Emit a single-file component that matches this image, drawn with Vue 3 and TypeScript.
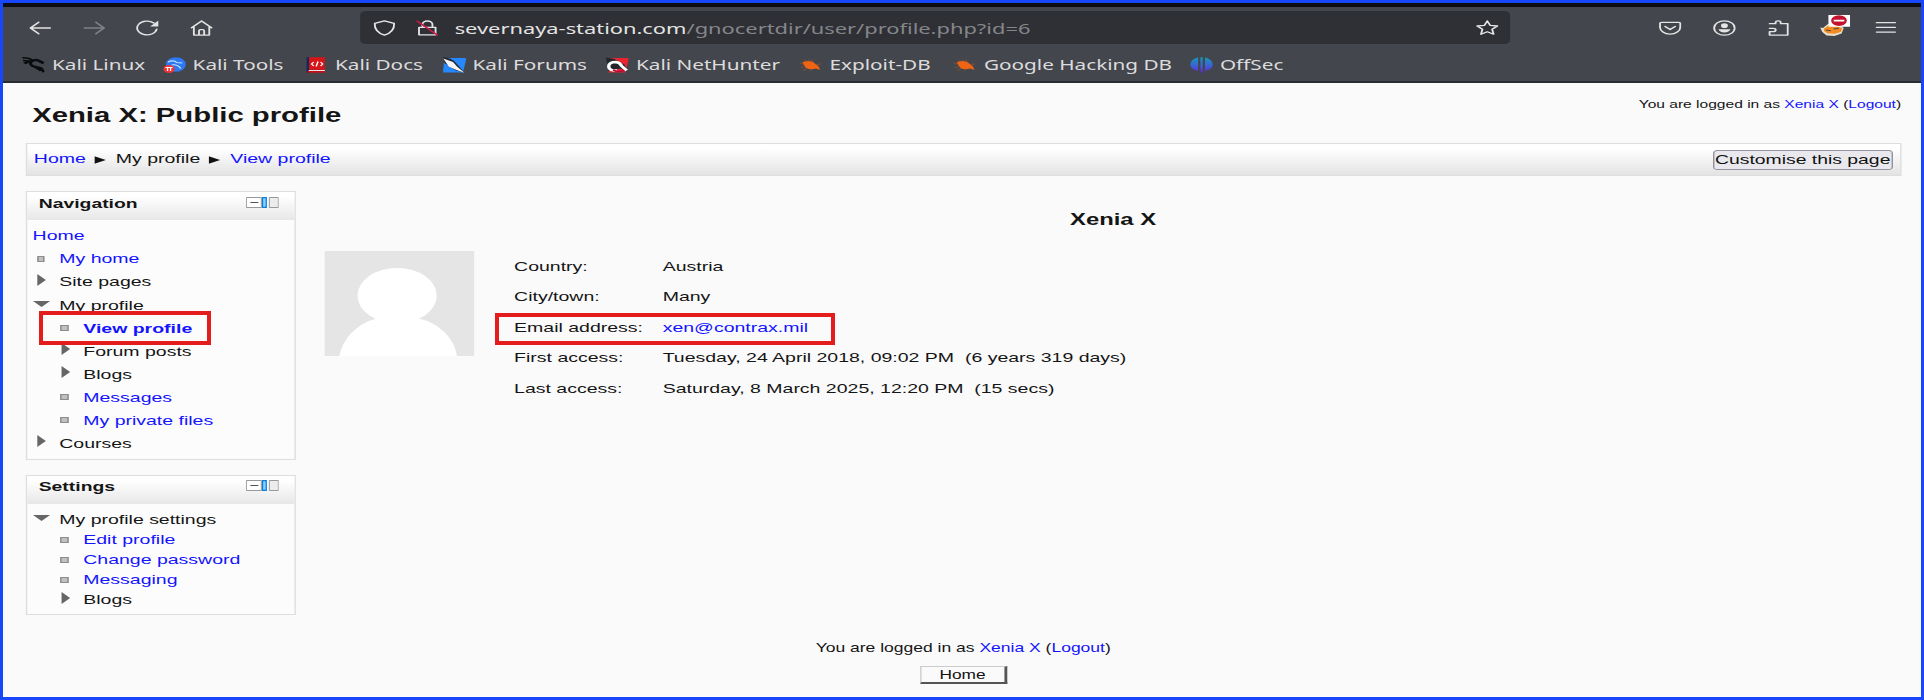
<script setup lang="ts">
type Marker = 'none' | 'leaf' | 'closed' | 'open'

interface TreeItem {
  label: string
  level: number
  marker: Marker
  link?: boolean
  current?: boolean
}

interface Block {
  title: string
  kind: string
  items: TreeItem[]
}

interface Bookmark {
  label: string
  icon: string
  width: number
}

const bookmarks: Bookmark[] = [
  { label: 'Kali Linux', icon: 'dragon', width: 98.4 },
  { label: 'Kali Tools', icon: 'tools', width: 99.7 },
  { label: 'Kali Docs', icon: 'docs', width: 96.3 },
  { label: 'Kali Forums', icon: 'forums', width: 114.4 },
  { label: 'Kali NetHunter', icon: 'hunter', width: 135.5 },
  { label: 'Exploit-DB', icon: 'bug', width: 108.1 },
  { label: 'Google Hacking DB', icon: 'bug', width: 165.2 },
  { label: 'OffSec', icon: 'offsec', width: 80 },
]

const blocks: Block[] = [
  {
    title: 'Navigation',
    kind: 'navigation',
    items: [
      { label: 'Home', level: 0, marker: 'none', link: true },
      { label: 'My home', level: 1, marker: 'leaf', link: true },
      { label: 'Site pages', level: 1, marker: 'closed' },
      { label: 'My profile', level: 1, marker: 'open' },
      { label: 'View profile', level: 2, marker: 'leaf', link: true, current: true },
      { label: 'Forum posts', level: 2, marker: 'closed' },
      { label: 'Blogs', level: 2, marker: 'closed' },
      { label: 'Messages', level: 2, marker: 'leaf', link: true },
      { label: 'My private files', level: 2, marker: 'leaf', link: true },
      { label: 'Courses', level: 1, marker: 'closed' },
    ],
  },
  {
    title: 'Settings',
    kind: 'settings',
    items: [
      { label: 'My profile settings', level: 1, marker: 'open' },
      { label: 'Edit profile', level: 2, marker: 'leaf', link: true },
      { label: 'Change password', level: 2, marker: 'leaf', link: true },
      { label: 'Messaging', level: 2, marker: 'leaf', link: true },
      { label: 'Blogs', level: 2, marker: 'closed' },
    ],
  },
]

const details = [
  { label: 'Country:', value: 'Austria' },
  { label: 'City/town:', value: 'Many' },
  { label: 'Email address:', value: 'xen@contrax.mil', link: true },
  { label: 'First access:', value: 'Tuesday, 24 April 2018, 09:02 PM\u00a0 (6 years 319 days)' },
  { label: 'Last access:', value: 'Saturday, 8 March 2025, 12:20 PM\u00a0 (15 secs)' },
]
</script>

<template>
  <div class="frame">
    <div class="screen">
      <div class="tabstrip"></div>
      <header class="chrome">
        <div class="toolbar">
          <div class="group">
            <svg class="ico" viewBox="0 0 16 16"><path d="M15 8H1.500M7 2.200 1.200 8 7 13.800" /></svg>
            <svg class="ico dim" viewBox="0 0 16 16"><path d="M1 8h13.500M9 2.200 14.800 8 9 13.800" /></svg>
            <svg class="ico" viewBox="0 0 16 16"><path d="M14.600 9.200A6.900 6.900 0 1 1 12.600 3" /><path class="fill" d="M15.800.6v5.800H10z" /></svg>
            <svg class="ico" viewBox="0 0 16 16"><path d="M1 7.800 8 1l7 6.800M2.600 6.800v8.300h10.800V6.800M6.200 15v-4.300q0-1 1-1h1.600q1 0 1 1V15" /></svg>
          </div>
          <div class="urlbar">
            <svg class="ico" viewBox="0 0 16 16"><path d="M8 .8 14.800 3.400C15 9 12.500 13 8 15.200 3.500 13 1 9 1.200 3.400z" /></svg>
            <svg class="ico lock" viewBox="0 0 16 16"><path d="M4.600 7V4.500a3.500 3.500 0 0 1 7 0V7M2.200 7.300h11.600v7.500H2.200z" /><path class="slash" d="M1 1.200 15 15" /></svg>
            <span class="url"><b>severnaya-station.com</b>/gnocertdir/user/profile.php?id=6</span>
            <svg class="ico star" viewBox="0 0 16 16"><path d="m8 .9 2.100 4.500 5 .6-3.700 3.300 1 4.900L8 11.800l-4.400 2.400 1-4.900L.9 6l5-.6z" /></svg>
          </div>
          <div class="group end">
            <svg class="ico" viewBox="0 0 16 16"><path d="M1.900 2.300h12.200q1 0 1 1v3.900a7.100 6.900 0 0 1-14.200 0V3.300q0-1 1-1zM4.500 6.500 8 9.600l3.500-3.100" /></svg>
            <svg class="ico" viewBox="0 0 16 16"><circle cx="8" cy="8" r="7.200" /><circle class="fill" cx="8" cy="5.700" r="2.400" /><path class="fill" d="M3.800 9.300h8.400c-.4 2-2 3.200-4.200 3.200s-3.800-1.200-4.200-3.200z" /></svg>
            <svg class="ico" viewBox="0 0 16 16"><path d="M1.600 3.700h4.200V2.600a1.800 1.800 0 0 1 3.600 0v1.100h4.900v11.400H1.600v-3.400h2.600a1.700 1.700 0 0 0 0-3.400H1.600" /></svg>
            <svg class="fox" viewBox="0 0 21 21">
              <path fill="#e9e0cb" d="M0 12.500 2 13l3-3.500 5-2.500 6.500 6-1.500 5.500-5 2.500-5.500-.5L1.500 17z" />
              <path fill="#f18b24" d="M2.500 13.500 4 12.500l2-2.500h5l4.500 3.500-1 3.500-4.500 1.700-5-.5L2.800 16z" />
              <path fill="none" stroke="#5a4939" stroke-width="1" d="m4 15 3.500.8M9.500 14l3.500-.8" />
              <path fill="#fff" d="M5.800 0h15.200v11.800H5.800z" />
              <ellipse cx="13.200" cy="5.600" rx="5.500" ry="5.300" fill="#c3122f" />
              <path fill="#fff" d="M9.500 4.700h7.400v1.900H9.500z" />
            </svg>
            <svg class="ico" viewBox="0 0 16 16"><path d="M1.500 2.700h13M1.500 7.400h13M1.500 12.100h13" /></svg>
          </div>
        </div>
        <nav class="bookmarks">
          <div v-for="mark in bookmarks" :key="mark.label" class="bookmark" :style="{ width: mark.width + 'px' }">
            <svg v-if="mark.icon === 'dragon'" class="fav" viewBox="0 0 16 16">
              <path fill="none" stroke="#0b0c0e" stroke-width="1.500" d="M.5.800q5.500.2 7.500 2.700M1 3.500l5 .8" />
              <path fill="none" stroke="#0b0c0e" stroke-width="2.400" d="M2 6.500q2-2.300 5-2.300 3-2.200 5-.5l3.500 2.500" />
              <path fill="none" stroke="#0b0c0e" stroke-width="2.200" d="M6.500 4.500q-1 4.500 3 5.200l4 1.500 2.300 4M9 9.500l4.500 4" />
            </svg>
            <svg v-else-if="mark.icon === 'tools'" class="fav" viewBox="0 0 16 16">
              <ellipse cx="9" cy="7.500" rx="7" ry="7.300" fill="#2c79f3" />
              <path fill="none" stroke="#c9e0ff" stroke-width="1.100" d="M3.500 5q4-2.500 6 .5l4 .5M6 8q4-1 6.500 3.500" />
              <circle cx="4.200" cy="12" r="4" fill="#ee3434" />
              <path fill="none" stroke="#fff" stroke-width=".9" d="M1.700 10.500h5M3.200 10.500v3.500M5.300 10.500v3.500" />
            </svg>
            <svg v-else-if="mark.icon === 'docs'" class="fav" viewBox="0 0 16 16">
              <path fill="#16275a" d="M1.500.3h2v15.400h-2z" />
              <path fill="#d81418" d="M3.300.3h11v12.500h-11z" />
              <path fill="#f1dede" d="M3 13h11.300v1.200H3z" />
              <path fill="#c80e14" d="M2 14h12.500v1.700H2z" />
              <path fill="none" stroke="#fff" stroke-width="1" d="M6.500 5 5 7l1.500 2M11.300 5l1.500 2-1.500 2M9.500 4.500l-1.300 5" />
            </svg>
            <svg v-else-if="mark.icon === 'forums'" class="fav" viewBox="0 0 16 16">
              <path fill="#2688ff" d="M1 1h15.500L14 15.500H0z" />
              <path fill="#24282e" d="M0 0q6 1 8.500 5l6.500 10.500-6-2L1 6z" />
              <path fill="#f4f5f6" d="M.2 1.500 7 5l2.800 4.500 5.200 6.200-5.500-2.700L4 9.500z" />
            </svg>
            <svg v-else-if="mark.icon === 'hunter'" class="fav" viewBox="0 0 16 16">
              <path fill="#ea2431" d="M3 1h13.200L13.500 15.500H2z" />
              <path fill="#22252a" d="M0 .5 6 2l7 5.500 2 7-5-3-8 2.500-1-7z" />
              <path fill="none" stroke="#fff" stroke-width="2.400" d="M8 13.500q-6 .5-6-4t5-4.500q3 .500 4 4l3.500 4.500" />
              <path fill="none" stroke="#b90e37" stroke-width="1.500" d="M5 13q4 2.500 8 .5" />
            </svg>
            <svg v-else-if="mark.icon === 'bug'" class="fav bug" viewBox="0 0 16 16">
              <path fill="#ee6412" d="M2.500 5.500Q6 2.800 10 5l4 4.500 1 3.500-3-1.400q-4 1.800-7-.8z" />
              <path fill="none" stroke="#a8541f" stroke-width=".5" d="m2.500 7-2-1M4 10l-2.500.4M6 11.500 3 13.600M9 12l-1 2M6 5 4 2.500M9.500 5l0-2.500M12 7.500l3.500-.5M8 4 6.500 2" />
            </svg>
            <svg v-else class="fav" viewBox="0 0 16 16">
              <defs><linearGradient id="offsec-tint" gradientUnits="userSpaceOnUse" x1="0" y1="0" x2="0" y2="16"><stop stop-color="#139bb8" /><stop offset=".55" stop-color="#3b62d8" /><stop offset="1" stop-color="#6422cf" /></linearGradient></defs>
              <path fill="url(#offsec-tint)" d="M5.600.6v13.200C2 13.200.2 10.500.2 7.500S2.500 1.200 5.600.6zM10.400.6v13.200c3.600-.6 5.400-3.300 5.400-6.300S13.500 1.200 10.400.6zM7.200.3h1.600v15.500H7.200z" />
            </svg>
            <span>{{ mark.label }}</span>
          </div>
        </nav>
      </header>

      <main class="page">
        <div class="page-head">
          <h1>Xenia X: Public profile</h1>
          <p class="login">You are logged in as <a>Xenia X</a> (<a>Logout</a>)</p>
        </div>
        <div class="crumbs">
          <a>Home</a>
          <svg class="sep" viewBox="0 0 8 8" preserveAspectRatio="none"><path d="M0 .3 8 4 0 7.700z" /></svg>
          <span>My profile</span>
          <svg class="sep" viewBox="0 0 8 8" preserveAspectRatio="none"><path d="M0 .3 8 4 0 7.700z" /></svg>
          <a>View profile</a>
          <button class="customise">Customise this page</button>
        </div>
        <div class="columns">
          <aside>
            <section v-for="block in blocks" :key="block.title" class="block" :class="block.kind">
              <h2>
                {{ block.title }}
                <svg class="controls" viewBox="0 0 33 11" preserveAspectRatio="none">
                  <path fill="#fff" stroke="#999" d="M.5.5h15v10H.500z" />
                  <path stroke="#555" d="M4.500 5.500h8" />
                  <path fill="#8fd0ff" stroke="#087fe0" stroke-width="1.300" d="M16.700.6h3.700v9.800h-3.700z" />
                  <path fill="#ececec" stroke="#999" d="M23.500.5h9v10h-9z" />
                </svg>
              </h2>
              <ul>
                <li v-for="item in block.items" :key="item.label" :class="['level' + item.level, { current: item.current }]">
                  <i v-if="item.marker !== 'none'" class="marker"><span :class="item.marker"></span></i>
                  <a v-if="item.link">{{ item.label }}</a>
                  <span v-else>{{ item.label }}</span>
                </li>
              </ul>
            </section>
          </aside>
          <section class="profile">
            <h2>Xenia X</h2>
            <div class="profile-body">
              <svg class="avatar" viewBox="0 0 150 105" preserveAspectRatio="none">
                <path fill="#e5e5e5" d="M0 0h150v105H0z" />
                <ellipse cx="72.700" cy="44.700" rx="39.600" ry="27.700" fill="#fff" />
                <path fill="#fff" d="M15 105C18 88 33 72 52 67.800H95C115 72 130 88 132.500 105z" />
              </svg>
              <dl>
                <template v-for="row in details" :key="row.label">
                  <dt>{{ row.label }}</dt>
                  <dd><a v-if="row.link">{{ row.value }}</a><template v-else>{{ row.value }}</template></dd>
                </template>
              </dl>
            </div>
          </section>
        </div>
        <footer>
          <p>You are logged in as <a>Xenia X</a> (<a>Logout</a>)</p>
          <a class="home-button">Home</a>
        </footer>
      </main>
    </div>
    <div class="highlight view-profile"></div>
    <div class="highlight email"></div>
  </div>
</template>

<style>
body {
  margin: 0;
}
</style>

<style scoped>
* {
  box-sizing: border-box;
}
.frame {
  position: relative;
  width: 1924px;
  height: 700px;
  border: 3px solid #1746fb;
  overflow: hidden;
}
/* The desktop is shown wider than its native proportions. */
.screen {
  width: 1342.6px;
  height: 694px;
  transform: scaleX(1.428571);
  transform-origin: 0 0;
  background: #fafafa;
  color: #151515;
  font: 13.65px "Liberation Sans", Arial, sans-serif;
  display: flex;
  flex-direction: column;
}
h1,
h2,
p,
ul,
dl,
dd {
  margin: 0;
  padding: 0;
}
a {
  color: #1414ff;
}
.tabstrip {
  height: 4px;
  background: #0c0c12;
}
.chrome {
  height: 76px;
  flex: none;
  background: #44464d;
  border-bottom: 2px solid #2b2c31;
  font-family: "Noto Sans", sans-serif;
  color: #dcdcdc;
}
.toolbar {
  display: flex;
  align-items: center;
  height: 37px;
  padding: 4px 16.300px 0 17.900px;
}
.group {
  display: flex;
  gap: 21.700px;
  align-items: center;
}
.group.end {
  margin-left: auto;
  margin-right: 0.400px;
}
.ico {
  width: 16px;
  height: 16px;
  flex: none;
  fill: none;
  stroke: #e4e4e4;
  stroke-width: 1.300;
  stroke-linejoin: round;
  stroke-linecap: round;
}
.ico .fill {
  fill: #e4e4e4;
  stroke: none;
}
.dim {
  stroke: #808187;
}
.ico .slash {
  stroke: #d3184a;
  stroke-width: 1.200;
}
.fox {
  width: 21px;
  height: 21px;
  margin: -8px -4.500px -4px -0.500px;
}
.urlbar {
  display: flex;
  align-items: center;
  width: 805px;
  height: 33px;
  margin-left: 103.500px;
  padding: 0 8.700px;
  background: #2f3035;
  border-radius: 4px;
}
.lock {
  margin-left: 14px;
}
.url {
  margin-left: 11px;
  padding-top: 1px;
  font-size: 15.300px;
  line-height: 33px;
  color: #85868a;
  white-space: nowrap;
}
.url b {
  font-weight: 400;
  color: #e4e4e4;
}
.star {
  margin-left: auto;
}
.bookmarks {
  display: flex;
  height: 37px;
  padding: 4px 0 0 13.300px;
}
.bookmark {
  display: flex;
  align-items: center;
  flex: none;
  font-size: 14.500px;
  line-height: 33px;
  height: 33px;
  white-space: nowrap;
}
.fav {
  width: 16px;
  height: 16px;
  margin-right: 5px;
  flex: none;
}
.bug {
  margin-left: -0.700px;
  margin-right: 5.700px;
}
.page {
  padding: 0 13.900px 0 15.600px;
  flex: 1;
}
.page-head {
  display: flex;
  justify-content: space-between;
  height: 60px;
}
h1 {
  padding: 20px 0 0 4.800px;
  font-size: 20.500px;
  line-height: 24px;
}
.login {
  padding-top: 14px;
  font-size: 10.900px;
  line-height: 14px;
}
.crumbs {
  display: flex;
  align-items: center;
  height: 33px;
  padding: 0 4.900px 0 5px;
  border: 1px solid #dedede;
  background: linear-gradient(#fff 15%, #e3e3e3);
  line-height: 29px;
}
.crumbs > a,
.crumbs > span {
  padding-bottom: 2px;
}
.sep {
  width: 8px;
  height: 8px;
  margin: 0 6.700px 0 6.300px;
  fill: #111;
}
.customise {
  margin-left: auto;
  width: 126px;
  height: 20px;
  padding: 0;
  border: 1.300px solid #9292a0;
  border-radius: 3px;
  background: #e9e9ed;
  color: #111;
  font: 13.550px/17px "Liberation Sans", Arial, sans-serif;
  white-space: nowrap;
}
.columns {
  display: flex;
  gap: 20.800px;
  padding-top: 15px;
  height: 439px;
}
aside {
  width: 189px;
  flex: none;
  display: flex;
  flex-direction: column;
  gap: 15px;
}
.block {
  border: 1px solid #dedede;
  background: #fcfcfc;
}
.navigation {
  height: 269px;
}
.settings {
  height: 140px;
}
.block h2 {
  display: flex;
  justify-content: space-between;
  height: 28px;
  padding: 0 10.800px 4px 8.400px;
  background: linear-gradient(#fff 15%, #e7e7e7);
  font-size: 13.550px;
  line-height: 24px;
}
.block.settings h2 {
  line-height: 22px;
}
.controls {
  width: 23.100px;
  height: 11px;
  margin-top: 5px;
}
.settings .controls {
  margin-top: 4px;
}
.block ul {
  padding: 4.400px 0 0 4.100px;
  list-style: none;
}
.block li {
  display: flex;
  height: 23.060px;
  line-height: 23.060px;
  white-space: nowrap;
}
.block.settings ul {
  padding-top: 5.500px;
}
.block.settings li {
  height: 20px;
  line-height: 20px;
}
.level2 {
  padding-left: 16.800px;
}
.current {
  font-weight: 700;
}
.marker {
  display: flex;
  align-items: center;
  width: 18.700px;
  flex: none;
}
.leaf {
  width: 5.600px;
  height: 6px;
  margin-left: 3px;
  border: 1.200px solid #8c8c8c;
  background: #c0c0c0;
}
.closed {
  margin: -4px 0 0 3.200px;
  border-style: solid;
  border-width: 6px 0 6px 6.500px;
  border-color: transparent transparent transparent #666;
}
.open {
  margin: -3px 0 0 0.300px;
  border-style: solid;
  border-width: 6px 6px 0;
  border-color: #666 transparent transparent;
}
.profile {
  flex: 1;
}
.profile h2 {
  padding-top: 19px;
  font-size: 16.700px;
  line-height: 20px;
  text-align: center;
}
.profile-body {
  display: flex;
  padding-top: 21px;
}
.avatar {
  width: 105px;
  height: 105px;
}
dl {
  display: grid;
  grid-template-columns: 104px auto;
  grid-auto-rows: 30.450px;
  margin-left: 27.400px;
  line-height: 31px;
}
footer {
  display: flex;
  flex-direction: column;
  align-items: center;
  padding-top: 25.500px;
}
footer p {
  font-size: 12.250px;
  line-height: 14px;
}
.home-button {
  width: 61px;
  height: 18px;
  margin-top: 11px;
  border: 1px solid #ccc;
  border-right: 2px solid #555;
  border-bottom: 2px solid #555;
  color: #111;
  font-size: 12.100px;
  line-height: 16px;
  text-align: center;
}
/* Marker boxes drawn over the captured page. */
.highlight {
  position: absolute;
  border: 4px solid #e51c1c;
}
.view-profile {
  left: 35.500px;
  top: 308px;
  width: 172.500px;
  height: 34px;
}
.email {
  left: 491.500px;
  top: 310px;
  width: 340.500px;
  height: 31.500px;
}
</style>
